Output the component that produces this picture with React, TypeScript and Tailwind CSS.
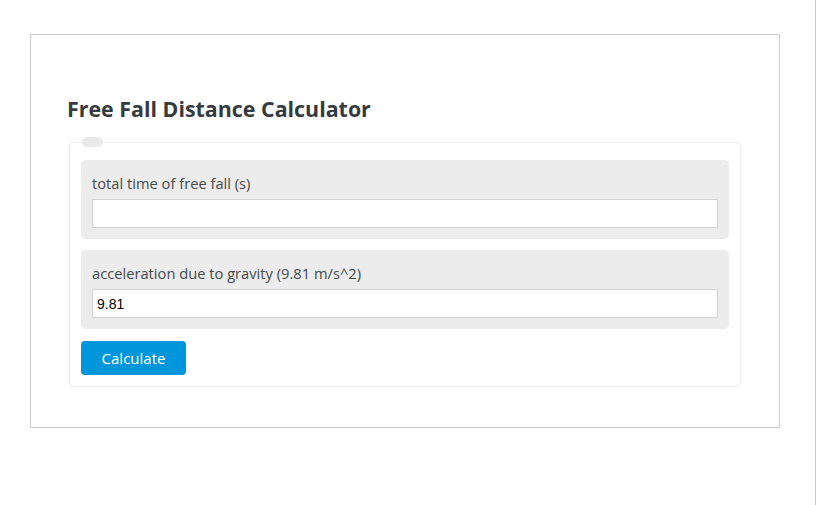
import React from 'react';

const fields = [
  { id: 'time', label: 'total time of free fall (s)', value: '' },
  { id: 'gravity', label: 'acceleration due to gravity (9.81 m/s^2)', value: '9.81' },
];

const App: React.FC = () => {
  return (
    <div className="flex w-[817px] h-[505px] bg-white" style={{ fontFamily: '"Open Sans", "Noto Sans", sans-serif' }}>
      <div className="w-[815px] pt-[34px] pl-[30px]">
        <div className="w-[750px] border border-[#cccccc] px-[38px] pt-[59px] pb-[40px]">
          <h1 className="-ml-[2px] text-[21.4px] leading-[30px] font-bold text-[#363b40] mb-[13px]">
            Free Fall Distance Calculator
          </h1>
          <fieldset className="border border-[#ececec] rounded-[5px] px-[11px] pb-[11px]">
            <legend className="ml-[1px] w-[21px] h-[10px] rounded-full bg-[#e8e9e8]"></legend>
            <div className="pt-[13px] flex flex-col gap-[11px]">
              {fields.map((f) => (
                <div key={f.id} className="bg-[#ebeceb] rounded-[5px] px-[11px] pt-[13px] pb-[11px]">
                  <label htmlFor={f.id} className="block text-[14.7px] leading-[20px] text-[#474a4d] mb-[6px]">
                    {f.label}
                  </label>
                  <input
                    id={f.id}
                    defaultValue={f.value}
                    className="block w-full h-[29px] bg-white border border-[#d3d3d3] px-[4px] text-[14px] text-black outline-none"
                    style={{ fontFamily: '"Liberation Sans", Arial, sans-serif' }}
                  />
                </div>
              ))}
              <div className="mt-[1px]">
                <button className="w-[105px] h-[34px] rounded-[4px] bg-[#0096db] text-white text-[15px] leading-[34px]">
                  Calculate
                </button>
              </div>
            </div>
          </fieldset>
        </div>
      </div>
      <div className="w-px h-full bg-[#c9c9c9]"></div>
      <div className="w-px h-full bg-white"></div>
    </div>
  );
};

export default App;
